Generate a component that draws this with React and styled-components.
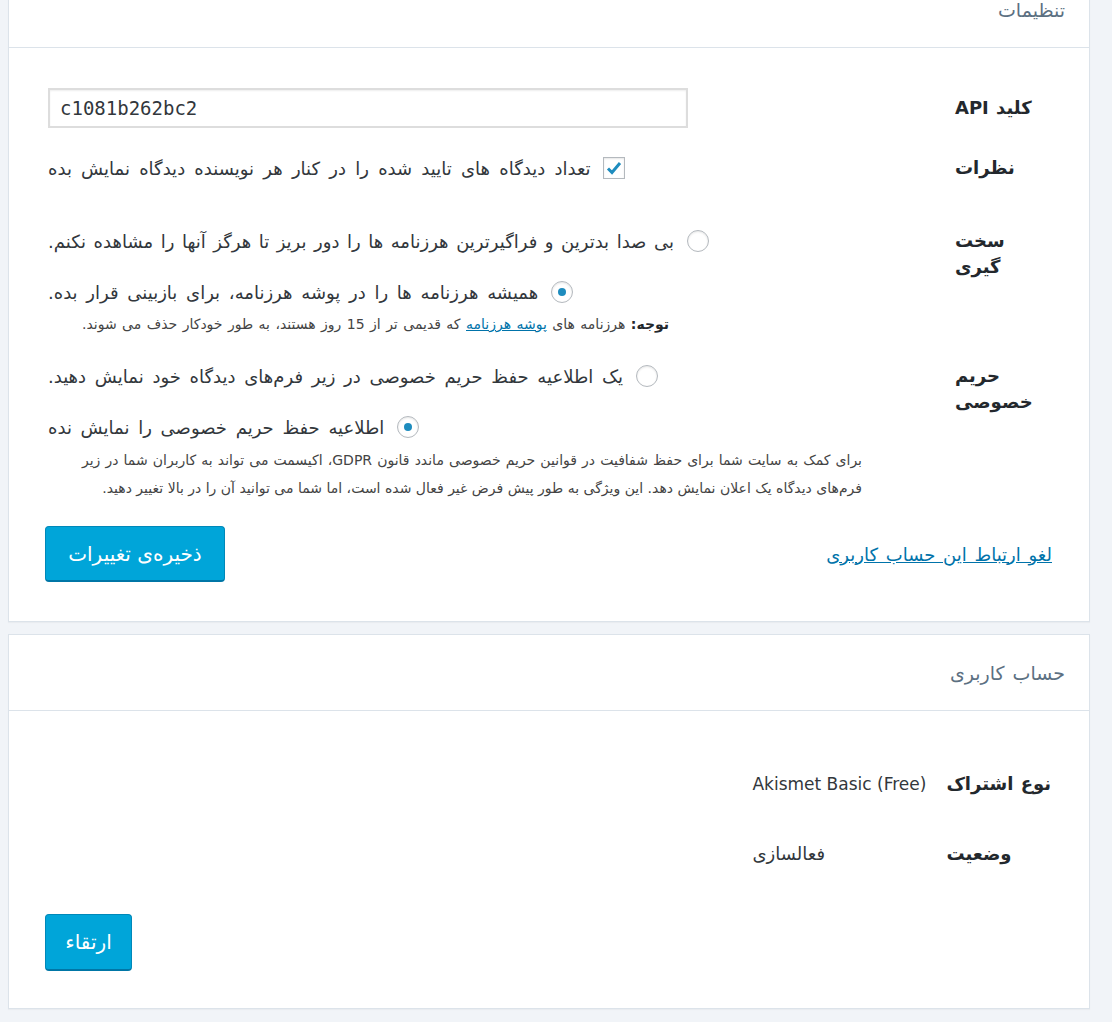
import React from "react";
import styled, { createGlobalStyle } from "styled-components";

const GlobalStyle = createGlobalStyle`
  html, body { margin: 0; padding: 0; }
  body {
    background: #f1f4f8;
    font-family: "DejaVu Sans", "Noto Sans", sans-serif;
    color: #32373c;
    direction: rtl;
  }
`;

const Page = styled.div`
  display: flex;
  flex-direction: column;
  gap: 12px;
  padding: 0 22px 11px 8px;
  margin-top: -29px;
`;

const Card = styled.section`
  background: #fff;
  border: 1px solid #dce3ea;
  box-shadow: 0 1px 1px rgba(0, 0, 0, 0.03);
`;

const CardHeader = styled.div`
  height: 75px;
  display: flex;
  align-items: center;
  padding: 0 24px;
  border-bottom: 1px solid #dce3ea;
`;

const CardTitle = styled.h2`
  margin: 0;
  font-size: 19px;
  font-weight: normal;
  color: #5c7082;
  word-spacing: 2px;
`;

const CardBody = styled.div`
  padding: ${(p) => p.$padding};
`;

const Row = styled.div`
  display: grid;
  grid-template-columns: 97px 1fr;
  padding-top: ${(p) => p.$pt || 0}px;
  margin-left: 3px;
`;

const Label = styled.div`
  text-align: left;
  font-weight: bold;
  font-size: 18px;
  line-height: ${(p) => p.$lh || 26}px;
  color: #23282d;
  word-spacing: 1px;
`;

const Field = styled.div`
  display: flex;
  flex-direction: column;
  align-items: flex-end;
`;

const KeyInput = styled.input`
  width: 640px;
  height: 40px;
  box-sizing: border-box;
  direction: ltr;
  text-align: left;
  padding: 0 10px;
  font-family: "DejaVu Sans Mono", "Liberation Mono", monospace;
  font-size: 19px;
  color: #32373c;
  border: 2px solid #dddddd;
  box-shadow: inset 0 1px 2px rgba(0, 0, 0, 0.07);
  outline: none;
`;

const Option = styled.label`
  display: flex;
  align-items: center;
  gap: ${(p) => p.$gap || 13}px;
  height: 26px;
  font-size: 18px;
  word-spacing: ${(p) => p.$ws ?? 3}px;
  color: #32373c;
  margin-top: ${(p) => p.$mt || 0}px;
  cursor: pointer;
`;

const CheckBox = styled.span`
  width: 20px;
  height: 20px;
  border: 1px solid #b4b9be;
  background: #fff;
  box-shadow: inset 0 1px 2px rgba(0, 0, 0, 0.1);
  display: flex;
  align-items: center;
  justify-content: center;
  flex-shrink: 0;
`;

const Radio = styled.span`
  width: 20px;
  height: 20px;
  border: 1px solid #b4b9be;
  border-radius: 50%;
  background: #fff;
  box-shadow: inset 0 1px 2px rgba(0, 0, 0, 0.1);
  display: flex;
  align-items: center;
  justify-content: center;
  flex-shrink: 0;
  &::after {
    content: "";
    width: 8px;
    height: 8px;
    border-radius: 50%;
    background: ${(p) => (p.$checked ? "#1e8cbe" : "transparent")};
  }
`;

const Note = styled.p`
  margin: ${(p) => p.$mt || 0}px 0 0 34px;
  font-size: 14px;
  line-height: 20px;
  color: #444;
  text-align: left;
  word-spacing: 1px;
  b { color: #23282d; }
`;

const Desc = styled.p`
  margin: 6px 0 0 34px;
  width: 780px;
  font-size: 14px;
  line-height: 28px;
  color: #444;
  text-align: justify;
  text-align-last: right;
`;

const InlineLink = styled.a`
  color: #0073aa;
  text-decoration: underline;
`;

const Footer = styled.div`
  display: flex;
  align-items: center;
  justify-content: space-between;
  margin-top: ${(p) => p.$mt || 0}px;
`;

const DisconnectLink = styled.a`
  color: #0073aa;
  font-size: 18px;
  word-spacing: 2px;
  text-decoration: underline;
  cursor: pointer;
`;

const Button = styled.button`
  width: ${(p) => p.$w}px;
  height: ${(p) => p.$h}px;
  box-sizing: border-box;
  background: #00a5d9;
  color: #fff;
  font-family: "DejaVu Sans", sans-serif;
  font-size: 20px;
  border: 1px solid #0088b9;
  border-bottom: 2px solid #0076a6;
  border-radius: 4px;
  cursor: pointer;
`;

const InfoTable = styled.div`
  display: grid;
  grid-template-columns: max-content max-content;
  column-gap: 20px;
  row-gap: 44px;
  justify-content: start;
  margin-right: 1px;
`;

const InfoValue = styled.div`
  text-align: left;
  font-size: ${(p) => (p.$latin ? 17 : 18)}px;
  line-height: 26px;
  color: #32373c;
`;

const CheckIcon = () => (
  <svg width="16" height="16" viewBox="0 0 16 16">
    <path d="M2 8.5 L6 12.5 L14 3" fill="none" stroke="#1e8cbe" strokeWidth="3" />
  </svg>
);

export default function App() {
  return (
    <>
      <GlobalStyle />
      <Page>
        <Card>
          <CardHeader>
            <CardTitle>تنظیمات</CardTitle>
          </CardHeader>
          <CardBody $padding="40px 37px 39px 36px">
            <Row>
              <Label $lh={40}>کلید API</Label>
              <Field>
                <KeyInput defaultValue="c1081b262bc2" />
              </Field>
            </Row>
            <Row $pt={27}>
              <Label>نظرات</Label>
              <Field>
                <Option $gap={12} $ws={3.5}>
                  <CheckBox>
                    <CheckIcon />
                  </CheckBox>
                  تعداد دیدگاه های تایید شده را در کنار هر نویسنده دیدگاه نمایش بده
                </Option>
              </Field>
            </Row>
            <Row $pt={47}>
              <Label>
                سخت
                <br />
                گیری
              </Label>
              <Field>
                <Option $ws={1.8}>
                  <Radio />
                  بی صدا بدترین و فراگیرترین هرزنامه ها را دور بریز تا هرگز آنها را مشاهده نکنم.
                </Option>
                <Option $mt={25}>
                  <Radio $checked />
                  همیشه هرزنامه ها را در پوشه هرزنامه، برای بازبینی قرار بده.
                </Option>
                <Note $mt={9}>
                  <b>توجه:</b> هرزنامه های <InlineLink href="#">پوشه هرزنامه</InlineLink> که
                  قدیمی تر از 15 روز هستند، به طور خودکار حذف می شوند.
                </Note>
              </Field>
            </Row>
            <Row $pt={29}>
              <Label>
                حریم
                <br />
                خصوصی
              </Label>
              <Field>
                <Option>
                  <Radio />
                  یک اطلاعیه حفظ حریم خصوصی در زیر فرم‌های دیدگاه خود نمایش دهید.
                </Option>
                <Option $mt={25}>
                  <Radio $checked />
                  اطلاعیه حفظ حریم خصوصی را نمایش نده
                </Option>
                <Desc>
                  برای کمک به سایت شما برای حفظ شفافیت در قوانین حریم خصوصی ماندد قانون GDPR،
                  اکیسمت می تواند به کاربران شما در زیر فرم‌های دیدگاه یک اعلان نمایش دهد. این
                  ویژگی به طور پیش فرض غیر فعال شده است، اما شما می توانید آن را در بالا تغییر
                  دهید.
                </Desc>
              </Field>
            </Row>
            <Footer $mt={24}>
              <DisconnectLink>لغو ارتباط این حساب کاربری</DisconnectLink>
              <Button $w={180} $h={56}>ذخیره‌ی تغییرات</Button>
            </Footer>
          </CardBody>
        </Card>

        <Card>
          <CardHeader>
            <CardTitle>حساب کاربری</CardTitle>
          </CardHeader>
          <CardBody $padding="60px 37px 37px 36px">
            <InfoTable>
              <Label>نوع اشتراک</Label>
              <InfoValue $latin>Akismet Basic (Free)</InfoValue>
              <Label>وضعیت</Label>
              <InfoValue>فعالسازی</InfoValue>
            </InfoTable>
            <Footer $mt={47}>
              <span />
              <Button $w={87} $h={57}>ارتقاء</Button>
            </Footer>
          </CardBody>
        </Card>
      </Page>
    </>
  );
}
